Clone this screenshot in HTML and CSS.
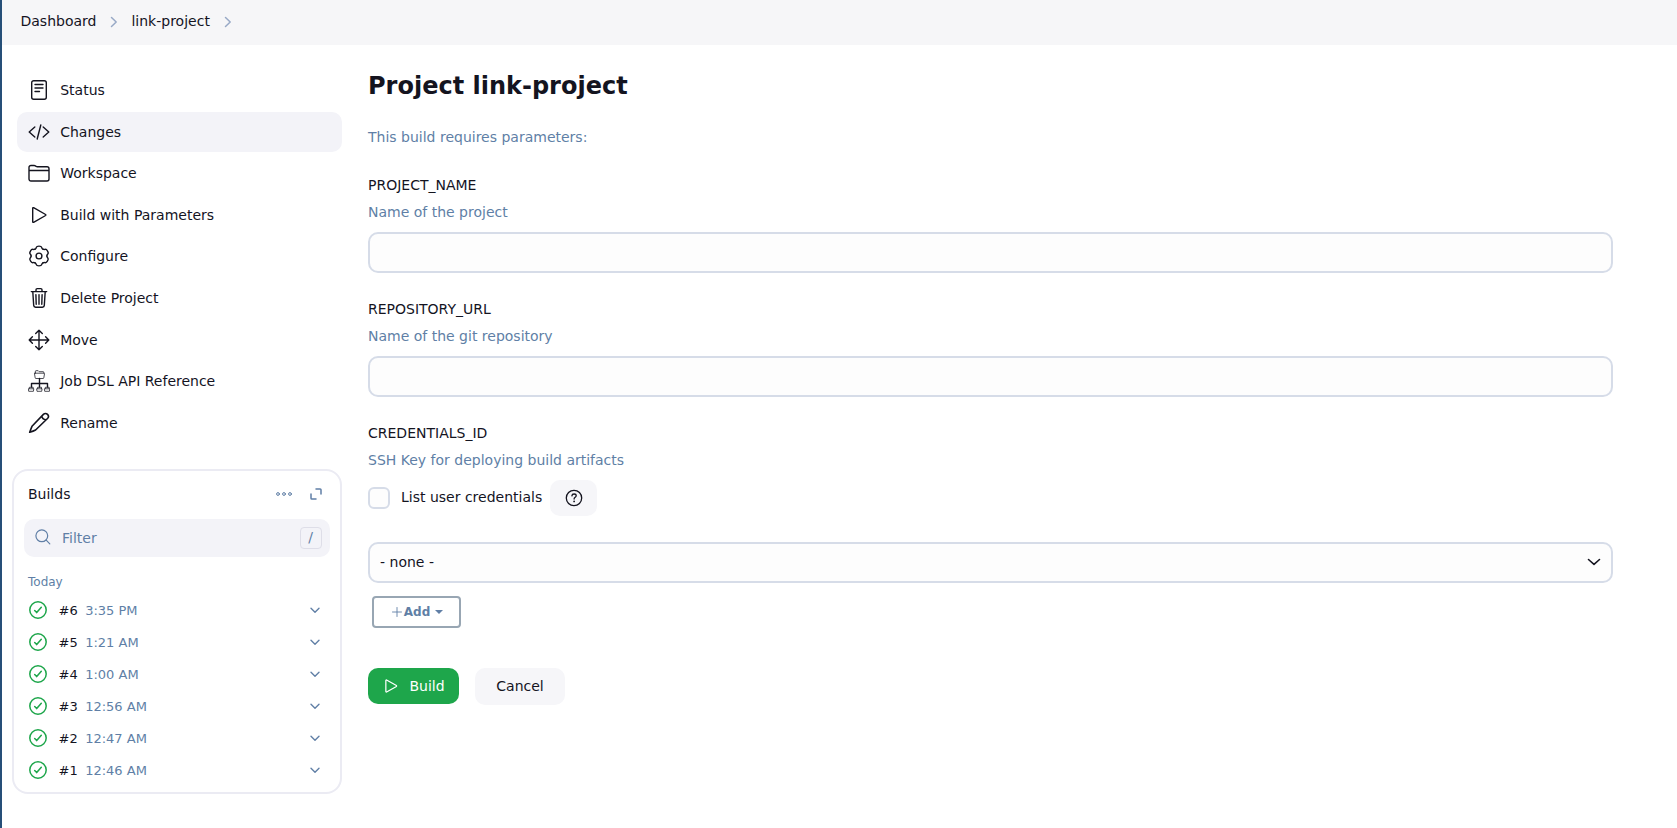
FILE: index.html
```html
<!DOCTYPE html>
<html lang="en">
<head>
<meta charset="utf-8">
<title>link-project</title>
<link rel="stylesheet" href="styles.css">
</head>
<body>
<svg class="sprite" aria-hidden="true">
  <symbol id="chev-right" viewBox="0 0 8 12"><path d="M1.5 1.5 6.2 6l-4.7 4.5"/></symbol>
  <symbol id="chev-down" viewBox="0 0 10 7"><path d="M1 1.2 5 5.2 9 1.2"/></symbol>
  <symbol id="ok" viewBox="0 0 20 20"><circle cx="10" cy="10" r="8.2"/><path d="M13.3 7.2 8.7 12.6 6.7 10.5"/></symbol>
  <symbol id="play" viewBox="0 0 22 22"><path d="M4.7 4.2v13.6a.6.6 0 0 0 .9.5l12-6.8a.6.6 0 0 0 0-1L5.600 3.700a.6.6 0 0 0-.9.5z"/></symbol>
  <symbol id="lobe" viewBox="0 0 22 22"><path d="M7.050 4.160C8.100 3.550 8.100 3.300 8.300 2.400 8.600 1.200 9.200 1.100 11 1.100s2.400.1 2.700 1.300c.2.9.2 1.150 1.250 1.760"/></symbol>
</svg>
<nav class="breadcrumbs">
  <a>Dashboard</a>
  <svg class="sep"><use href="#chev-right"/></svg>
  <a>link-project</a>
  <svg class="sep"><use href="#chev-right"/></svg>
</nav>
<div class="page">
  <aside class="side">
    <ul class="tasks">
      <li class="task"><svg class="icon" viewBox="0 0 22 22"><rect x="3.7" y="1.7" width="14.600" height="18.600" rx="2"/><path d="M7 5.500h8M7 9h8M7 12.500h4.500"/></svg>Status</li>
      <li class="task active"><svg class="icon" viewBox="0 0 22 22"><path d="M6.800 6 1.200 11l5.600 5M15.200 6l5.600 5-5.600 5M12.800 4 9.200 18"/></svg>Changes</li>
      <li class="task"><svg class="icon" viewBox="0 0 22 22"><path d="M1 17V5.500a2 2 0 0 1 2-2h3.200a2 2 0 0 1 1.100.3l.9.600a2 2 0 0 0 1.100.3H19a2 2 0 0 1 2 2V17a2 2 0 0 1-2 2H3a2 2 0 0 1-2-2zM1 8.500h20"/></svg>Workspace</li>
      <li class="task"><svg class="icon"><use href="#play"/></svg>Build with Parameters</li>
      <li class="task"><svg class="icon gear" viewBox="0 0 22 22"><circle cx="11" cy="11" r="2.900"/><use href="#lobe" width="22" height="22"/><use href="#lobe" width="22" height="22" transform="rotate(60 11 11)"/><use href="#lobe" width="22" height="22" transform="rotate(120 11 11)"/><use href="#lobe" width="22" height="22" transform="rotate(180 11 11)"/><use href="#lobe" width="22" height="22" transform="rotate(240 11 11)"/><use href="#lobe" width="22" height="22" transform="rotate(300 11 11)"/></svg>Configure</li>
      <li class="task"><svg class="icon" viewBox="0 0 22 22"><path d="M4.800 4.800l.9 13.600a1.900 1.900 0 0 0 1.900 1.800h6.800a1.900 1.900 0 0 0 1.900-1.800l.9-13.600M3.300 4.600h15.400M8 4.500V2.800a1.200 1.200 0 0 1 1.200-1.200h3.600A1.200 1.200 0 0 1 14 2.800v1.700M11 7.600v9.600M7.900 7.600l.3 9.600M14.100 7.600l-.3 9.600"/></svg>Delete Project</li>
      <li class="task"><svg class="icon" viewBox="0 0 22 22"><path d="M11 1.200v19.600M1.200 11h19.600M7.700 4.400 11 1.200l3.300 3.200M7.700 17.600l3.300 3.200 3.300-3.200M4.400 7.700 1.200 11l3.200 3.300M17.600 7.700l3.200 3.300-3.200 3.300"/></svg>Move</li>
      <li class="task"><svg class="icon dsl" viewBox="0 0 22 22"><path d="M11.500 8.500V17M3.500 17v-3.500h16V17"/><g class="thin"><path d="M7.400 3V1.300q0-.6.6-.6h2.200l1 1h4q.6 0 .6.600V3M6.900 3.200h9.200q.5 0 .4.600l-.7 4.100q-.1.600-.7.600H7.900q-.6 0-.7-.6l-.7-4.100q-.1-.6.4-.6z"/><path d="M.7 18.800h5.100l-.4 2.500H1.100zM9 18.800h5.100l-.4 2.500H9.400zM16.700 18.800h5.100l-.4 2.500h-4.300zM1.300 18.500v-1.200h3.900v1.200M9.600 18.500v-1.200h3.900v1.200M17.300 18.500v-1.200h3.900v1.200"/></g></svg>Job DSL API Reference</li>
      <li class="task"><svg class="icon pencil" viewBox="0 0 22 22"><path d="M15.400 2.400 4 14.300Q3 16.500 1.700 20.300q3.700-1.200 5.900-2.300L19.500 6.500a2.800 2.800 0 0 0-4.100-4.100zM13.900 4q.2 3.300 4.100 3.900"/></svg>Rename</li>
    </ul>
    <section class="builds">
      <header class="builds-head">
        <h2>Builds</h2>
        <svg class="dots" viewBox="0 0 18 6"><circle cx="3" cy="3" r="1.400"/><circle cx="9" cy="3" r="1.400"/><circle cx="15" cy="3" r="1.400"/></svg>
        <svg class="expand" viewBox="0 0 12 12"><path d="M6 1h4.200a.8.8 0 0 1 .8.800V6M1 6v4.200a.8.8 0 0 0 .8.800H6"/></svg>
      </header>
      <div class="filter">
        <svg class="search" viewBox="0 0 16 16"><circle cx="6.800" cy="6.800" r="5.900"/><path d="M11.200 11.200l3.600 3.600"/></svg>
        <span>Filter</span><kbd>/</kbd>
      </div>
      <p class="day">Today</p>
      <ul class="runs">
        <li><svg class="ok"><use href="#ok"/></svg><b>#6</b><span>3:35 PM</span><svg class="down"><use href="#chev-down"/></svg></li>
        <li><svg class="ok"><use href="#ok"/></svg><b>#5</b><span>1:21 AM</span><svg class="down"><use href="#chev-down"/></svg></li>
        <li><svg class="ok"><use href="#ok"/></svg><b>#4</b><span>1:00 AM</span><svg class="down"><use href="#chev-down"/></svg></li>
        <li><svg class="ok"><use href="#ok"/></svg><b>#3</b><span>12:56 AM</span><svg class="down"><use href="#chev-down"/></svg></li>
        <li><svg class="ok"><use href="#ok"/></svg><b>#2</b><span>12:47 AM</span><svg class="down"><use href="#chev-down"/></svg></li>
        <li><svg class="ok"><use href="#ok"/></svg><b>#1</b><span>12:46 AM</span><svg class="down"><use href="#chev-down"/></svg></li>
      </ul>
    </section>
  </aside>
  <main class="main">
    <h1>Project link-project</h1>
    <p class="intro">This build requires parameters:</p>
    <div class="field"><div class="label">PROJECT_NAME</div><div class="desc">Name of the project</div><input class="control" type="text"></div>
    <div class="field"><div class="label">REPOSITORY_URL</div><div class="desc">Name of the git repository</div><input class="control" type="text"></div>
    <div class="field">
      <div class="label">CREDENTIALS_ID</div><div class="desc">SSH Key for deploying build artifacts</div>
      <div class="check-row">
        <span class="box"></span><span class="check-label">List user credentials</span>
        <button class="help"><svg viewBox="0 0 18 18"><circle cx="9" cy="9" r="7.700"/><path d="M6.900 6.900c.1-1.200 1-1.900 2.200-1.900s2.100.7 2.100 1.800c0 1.600-2.100 1.500-2.100 3.200"/><circle class="dot" cx="9.100" cy="12.400" r=".9"/></svg></button>
      </div>
      <div class="control select"><span>- none -</span><svg viewBox="0 0 14 8"><path d="M1.500 1.500 7 6.300l5.500-4.800"/></svg></div>
      <button class="add"><svg class="plus" viewBox="0 0 10 10"><path d="M5 .5v9M.5 5h9"/></svg>Add<i class="caret"></i></button>
    </div>
    <div class="actions">
      <button class="btn primary"><svg><use href="#play"/></svg>Build</button>
      <button class="btn">Cancel</button>
    </div>
  </main>
</div>
</body>
</html>
```
FILE: styles.css
```css
* { box-sizing: border-box; margin: 0; padding: 0; }
body {
  min-height: 828px;
  border-left: 2px solid #264f78;
  background: #fff;
  color: #14141f;
  font: 14px/20px "DejaVu Sans", sans-serif;
}
ul { list-style: none; }
svg { flex: none; fill: none; stroke: currentColor; stroke-linecap: round; stroke-linejoin: round; }
button { border: 0; font: inherit; color: inherit; }
.sprite { display: none; }

.breadcrumbs { display: flex; align-items: center; height: 45px; padding: 0 0 3px 18.500px; background: #f6f6f8; }
.sep { width: 8px; height: 12px; margin: 2px 13px 0 14px; stroke: #98a9c6; stroke-width: 1.500; }

.page { display: flex; }
.side { width: 340px; padding: 24.950px 0 0 10px; }
.tasks { display: flex; flex-direction: column; gap: 1.600px; padding-left: 5px; }
.task { display: flex; align-items: center; gap: 10.200px; height: 40px; padding-left: 11px; border-radius: 10px; }
.task.active { background: #f3f3f8; }
.icon { width: 22px; height: 22px; stroke-width: 1.400; }
.pencil { stroke-width: 1.600; }
.thin { stroke-width: .75; }

.builds { height: 325px; margin-top: 26.250px; padding: 11px 10px 0; border: 2px solid #ebebf3; border-radius: 16px; }
.builds-head { display: flex; align-items: center; height: 24px; padding: 0 8px 0 4px; color: #607fa6; }
.builds-head h2 { flex: 1; color: #14141f; font-size: 14px; font-weight: 400; }
.dots { width: 18px; height: 6px; margin-right: 17px; }
.expand { width: 12px; height: 12px; stroke-width: 1.500; }
.filter { display: flex; align-items: center; height: 38px; margin-top: 13px; padding: 0 8px 0 11px; border-radius: 10px; background: #f3f3f8; color: #607fa6; }
.search { width: 16px; height: 16px; margin: -1px 11px 0 0; stroke-width: 1.200; }
.filter span { flex: 1; }
kbd { width: 22px; height: 22px; padding-right: 1px; border: 1px solid #dedee8; border-radius: 4px; font: 14px/19px "DejaVu Sans", sans-serif; text-align: center; }
.day { margin: 15px 0 3px 4px; color: #607fa6; font-size: 12px; line-height: 20px; }
.runs li { display: flex; align-items: center; height: 32px; padding: 0 10.500px 0 3.500px; font-size: 13px; }
.ok { width: 20px; height: 20px; margin: -1px 11px 0 0; stroke: #1ea64b; stroke-width: 1.500; }
.runs b { margin-right: 7.500px; font-weight: 400; }
.runs span { flex: 1; color: #607fa6; }
.down { width: 10px; height: 7px; margin-top: -1px; stroke: #607fa6; stroke-width: 1.400; }

.main { flex: 1; padding: 26px 64px 0 26px; }
h1 { font-size: 24px; line-height: 30px; font-weight: 700; }
.intro { margin: 26px 0 28px; color: #607fa6; }
.field { margin-bottom: 26px; }
.desc { margin: 7px 0 10px; color: #607fa6; }
.control { display: block; width: 100%; height: 41px; border: 2px solid #d6dce8; border-radius: 10px; background: #fdfdfd; }
.check-row { display: flex; align-items: center; height: 36px; margin: 8px 0 26px; }
.check-label { padding-bottom: 2px; }
.box { width: 22px; height: 22px; margin: 0 11px 0 0; border: 2px solid #d6dce8; border-radius: 6px; background: #fdfdfd; }
.help { display: flex; align-items: center; justify-content: center; width: 47px; height: 36px; margin-left: 8px; border-radius: 10px; background: #f6f6f9; }
.help svg { width: 18px; height: 18px; stroke-width: 1.300; }
.help .dot { fill: currentColor; stroke: none; }
.select { display: flex; align-items: center; justify-content: space-between; padding: 0 10px 1px 10px; }
.select svg { width: 14px; height: 8px; stroke-width: 1.600; }
.add { display: flex; align-items: center; justify-content: center; width: 89px; height: 32px; margin: 13px 0 0 4px; padding-left: 2px; border: 2px solid #98a6b3; border-radius: 4px; background: #fff; color: #607fa6; font-size: 12px; font-weight: 700; }
.plus { width: 10px; height: 10px; margin-right: 2px; stroke-width: .9; }
.caret { margin-left: 5px; border: 4px solid transparent; border-top-color: currentColor; border-bottom: 0; }
.actions { display: flex; gap: 16px; margin-top: 40px; }
.btn { display: flex; align-items: center; justify-content: center; width: 90px; height: 37px; padding-bottom: 1px; border-radius: 10px; background: #f6f6f9; }
.primary { width: 91px; height: 36px; padding: 0; background: #1ea64b; color: #fff; }
.primary svg { width: 18px; height: 18px; margin-right: 9px; stroke-width: 1.500; }
```
